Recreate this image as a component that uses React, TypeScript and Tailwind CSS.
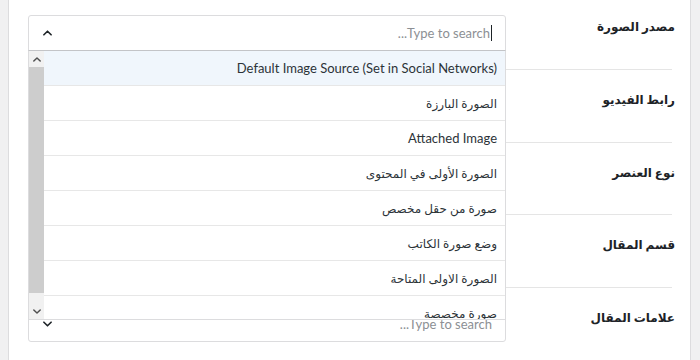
const FONT = { fontFamily: 'Lato, "DejaVu Sans", sans-serif' };

const FIELDS = [
  { label: 'مصدر الصورة', h: 'h-[73px]' },
  { label: 'رابط الفيديو', h: 'h-[73px]' },
  { label: 'نوع العنصر', h: 'h-[72px]' },
  { label: 'قسم المقال', h: 'h-[73px]' },
  { label: 'علامات المقال', h: 'h-[73px]' },
];

const OPTIONS = [
  'Default Image Source (Set in Social Networks)',
  'الصورة البارزة',
  'Attached Image',
  'الصورة الأولى في المحتوى',
  'صورة من حقل مخصص',
  'وضع صورة الكاتب',
  'الصورة الاولى المتاحة',
  'صورة مخصصة',
];

const isArabic = (s: string) => /[\u0600-\u06FF]/.test(s);

function Chevron({ up, className }: { up?: boolean; className?: string }) {
  return (
    <svg viewBox="0 0 10 6" className={className} fill="none" stroke="currentColor" strokeWidth="1.8" strokeLinecap="round" strokeLinejoin="round">
      <polyline points={up ? '1,5 5,1 9,5' : '1,1 5,5 9,1'} />
    </svg>
  );
}

function Placeholder() {
  return (
    <span dir="rtl" className="text-[13px] text-[#8c8f94] leading-none">
      Type to search...
    </span>
  );
}

function Dropdown() {
  return (
    <div className="absolute left-[-1px] right-[-1px] top-full z-10 h-[270px] bg-white border-x border-b border-t border-t-[#c3c4c7] border-x-[#dcdcde] border-b-[#dcdcde] flex overflow-hidden">
      <div className="w-[15px] shrink-0 flex flex-col bg-[#f1f1f1]">
        <div className="h-4 flex items-center justify-center text-[#505050]">
          <Chevron up className="w-[8px] h-[5px]" />
        </div>
        <div className="h-[226px] bg-[#cdcdcd]" />
        <div className="flex-1 flex items-end justify-center pb-[5px] text-[#505050]">
          <Chevron className="w-[8px] h-[5px]" />
        </div>
      </div>
      <div className="flex-1">
        {OPTIONS.map((o, i) => (
          <div
            key={o}
            dir="auto"
            className={`h-[35px] border-b border-[#e7e7e7] flex items-center justify-end pr-2 pt-px text-[#2c3338] ${isArabic(o) ? 'text-[12px]' : 'text-[13px]'} ${i === 0 ? 'bg-[#f0f6fc]' : ''}`}
          >
            <span dir="auto">{o}</span>
          </div>
        ))}
      </div>
    </div>
  );
}

function Select({ open }: { open?: boolean }) {
  return (
    <div className={`relative w-[478px] h-[36px] border border-[#dcdcde] bg-white flex items-center justify-between pl-[14px] pr-[13px] ${open ? 'rounded-t-[3px]' : 'rounded-[3px]'}`}>
      <Chevron up={open} className="w-[9px] h-[6px] text-[#1d2327]" />
      <div className="flex items-center">
        <Placeholder />
        {open && <span className="w-px h-4 bg-[#1d2327] ml-px" />}
      </div>
      {open && <Dropdown />}
    </div>
  );
}

export default function App() {
  return (
    <div className="w-[700px] h-[360px] bg-white flex overflow-hidden" style={FONT}>
      <div className="w-[9px] shrink-0 bg-[#f0f0f1] border-r border-[#dcdcde]" />
      <div className="flex-1 -mt-[3px]">
        {FIELDS.map((f, i) => (
          <div key={f.label} className={`${f.h} ml-[19px] mr-[18px] flex items-start ${i < FIELDS.length - 1 ? 'border-b border-[#e5e5e5]' : ''}`}>
            <div className="pt-[18px]">
              <Select open={i === 0} />
            </div>
            <div dir="rtl" className="flex-1 -mr-[3px] pt-[21px] text-[12px] leading-[18px] font-bold text-[#1d2327]">
              {f.label}
            </div>
          </div>
        ))}
      </div>
      <div className="w-[10px] shrink-0 bg-[#f0f0f1] border-l border-[#dcdcde]" />
    </div>
  );
}
